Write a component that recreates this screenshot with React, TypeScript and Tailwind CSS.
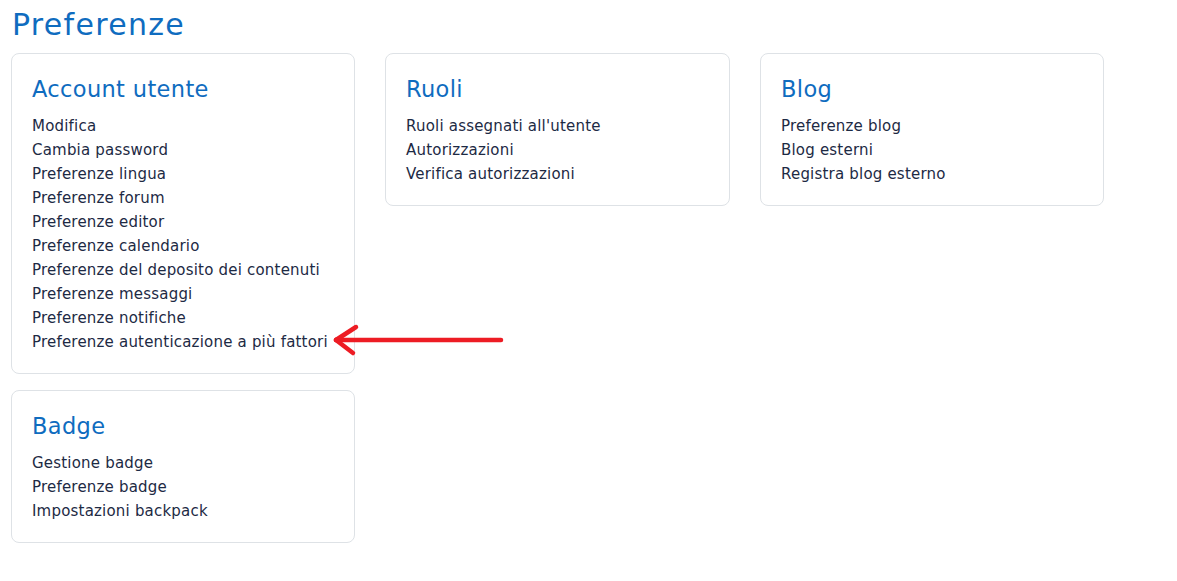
import React from "react";

type Section = { title: string; links: string[] };

const sections: Section[] = [
  {
    title: "Account utente",
    links: [
      "Modifica",
      "Cambia password",
      "Preferenze lingua",
      "Preferenze forum",
      "Preferenze editor",
      "Preferenze calendario",
      "Preferenze del deposito dei contenuti",
      "Preferenze messaggi",
      "Preferenze notifiche",
      "Preferenze autenticazione a più fattori",
    ],
  },
  {
    title: "Ruoli",
    links: ["Ruoli assegnati all'utente", "Autorizzazioni", "Verifica autorizzazioni"],
  },
  {
    title: "Blog",
    links: ["Preferenze blog", "Blog esterni", "Registra blog esterno"],
  },
  {
    title: "Badge",
    links: ["Gestione badge", "Preferenze badge", "Impostazioni backpack"],
  },
];

function PrefCard({ section, pointer }: { section: Section; pointer?: boolean }) {
  return (
    <div className="relative rounded-lg border border-[#dee2e6] bg-white px-5 pt-5 pb-[19px]">
      <h3 className="mb-[10px] text-[22.5px] leading-[30px] font-normal tracking-[0.35px] text-[#0f6cbf]">
        {section.title}
      </h3>
      <ul>
        {section.links.map((l) => (
          <li key={l} className="text-[15px] leading-6 tracking-[0.2px] text-[#1d2a44]">
            <a href="#">{l}</a>
          </li>
        ))}
      </ul>
      {/* red pointer next to the last account link */}
      {pointer && (
        <svg
          className="absolute left-[319px] bottom-[16px]"
          width="176"
          height="34"
          viewBox="0 0 176 34"
        >
          <g stroke="#ed1c24" strokeWidth="4.5" strokeLinecap="round" fill="none">
            <line x1="5" y1="17" x2="170" y2="17" />
            <line x1="5" y1="17" x2="25" y2="4" />
            <line x1="5" y1="17" x2="22" y2="30" />
          </g>
        </svg>
      )}
    </div>
  );
}

export default function App() {
  const [account, ruoli, blog, badge] = sections;
  return (
    <div
      className="min-h-screen bg-white pl-[11px] pt-[5px]"
      style={{ fontFamily: '"DejaVu Sans", sans-serif' }}
    >
      <h2 className="ml-[1px] mb-[8px] text-[30px] leading-[40px] tracking-[1.3px] text-[#0f6cbf]">
        Preferenze
      </h2>
      <div className="grid grid-cols-[344px_345px_344px] gap-x-[30px] gap-y-[16px] items-start">
        <PrefCard section={account} pointer />
        <PrefCard section={ruoli} />
        <PrefCard section={blog} />
        <PrefCard section={badge} />
      </div>
    </div>
  );
}
